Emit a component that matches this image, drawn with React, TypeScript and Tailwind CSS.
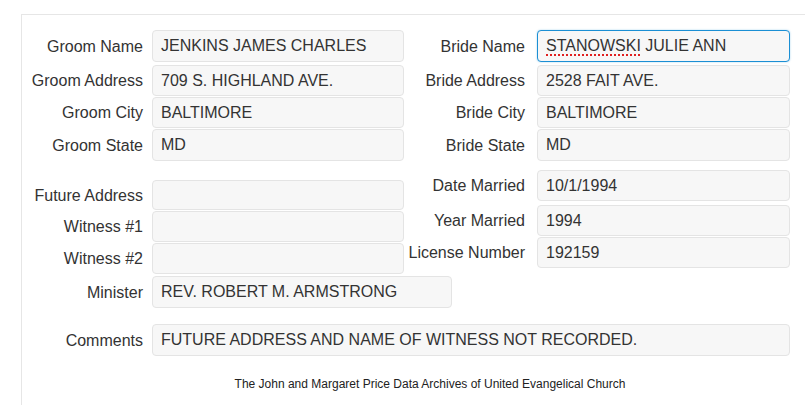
const font = { fontFamily: '"Liberation Sans", Arial, sans-serif' }

interface FieldProps {
  label: string
  value?: React.ReactNode
  rowClass?: string
  inputWidth?: string
}

// left-hand label + box, Bootstrap-ish horizontal form row
function Field({ label, value, rowClass = 'h-[32px]', inputWidth = 'w-[252px]' }: FieldProps) {
  return (
    <div className={['flex items-stretch', rowClass].join(' ')}>
      <div className="w-[121px] shrink-0 flex items-center justify-end text-[16px] text-[#333] whitespace-nowrap pt-[1px]">
        {label}
      </div>
      <div
        className={[
          'ml-[9px] flex items-center px-[8px] rounded-[4px] border border-[#e4e4e4] text-[16px] text-[#333] bg-[#f7f7f7] whitespace-nowrap',
          inputWidth,
        ].join(' ')}
      >
        {value}
      </div>
    </div>
  )
}

function RightField({ label, value, rowClass = 'h-[31px]' }: { label: string; value: React.ReactNode; rowClass?: string }) {
  return (
    <div className={['flex items-stretch', rowClass].join(' ')}>
      <div className="w-[121px] shrink-0 flex items-center justify-end text-[16px] text-[#333] whitespace-nowrap pt-[1px]">
        {label}
      </div>
      <div className="ml-[12px] w-[253px] flex items-center px-[8px] rounded-[4px] border border-[#e4e4e4] text-[16px] text-[#333] bg-[#f7f7f7] whitespace-nowrap">
        {value}
      </div>
    </div>
  )
}

export default function App() {
  return (
    <div className="w-[805px] h-[405px] bg-white overflow-hidden" style={font}>
      <div className="ml-[21px] mt-[14px] h-[391px] border-l border-t border-[#e6e6e6] pt-[15px]">
        {/* Groom / Bride */}
        <div className="flex">
          <div className="flex flex-col gap-[1px]">
            <Field label="Groom Name" value="JENKINS JAMES CHARLES" />
            <div className="mt-[2px] flex flex-col gap-[1px]">
              <Field label="Groom Address" value="709 S. HIGHLAND AVE." rowClass="h-[31px]" />
              <Field label="Groom City" value="BALTIMORE" rowClass="h-[31px]" />
              <Field label="Groom State" value="MD" rowClass="h-[32px]" />
            </div>
          </div>
          <div className="flex flex-col gap-[1px]">
            <div className="flex items-stretch h-[32px]">
              <div className="w-[121px] shrink-0 flex items-center justify-end text-[16px] text-[#333] pt-[1px]">
                Bride Name
              </div>
              <div className="ml-[12px] w-[253px] flex items-center px-[8px] rounded-[4px] border border-[#1b8fd4] shadow-[0_0_2px_rgba(27,143,212,0.4)] text-[16px] text-[#333] bg-[#f7f7f7] whitespace-nowrap">
                <span className="underline decoration-dotted decoration-[#e02020] decoration-2 underline-offset-[3px]">
                  STANOWSKI
                </span>
                &nbsp;JULIE ANN
              </div>
            </div>
            <div className="mt-[2px] flex flex-col gap-[1px]">
              <RightField label="Bride Address" value="2528 FAIT AVE." />
              <RightField label="Bride City" value="BALTIMORE" />
              <RightField label="Bride State" value="MD" rowClass="h-[32px]" />
            </div>
          </div>
        </div>

        {/* Other details */}
        <div className="flex">
          <div className="flex flex-col gap-[1px] mt-[19px]">
            <Field label="Future Address" rowClass="h-[30px]" />
            <Field label="Witness #1" rowClass="h-[31px]" />
            <Field label="Witness #2" rowClass="h-[31px]" />
            <div className="mt-[1px]">
              <Field label="Minister" value="REV. ROBERT M. ARMSTRONG" rowClass="h-[32px]" inputWidth="w-[300px]" />
            </div>
          </div>
          <div className="flex flex-col gap-[1px] mt-[9px] -ml-[48px]">
            <RightField label="Date Married" value="10/1/1994" />
            <div className="mt-[3px] flex flex-col gap-[1px]">
              <RightField label="Year Married" value="1994" />
              <RightField label="License Number" value="192159" />
            </div>
          </div>
        </div>

        {/* Comments */}
        <div className="mt-[16px]">
          <Field
            label="Comments"
            value="FUTURE ADDRESS AND NAME OF WITNESS NOT RECORDED."
            inputWidth="w-[638px]"
          />
        </div>

        <div className="mt-[19px] text-center text-[12px] text-[#222] pl-[33px]">
          The John and Margaret Price Data Archives of United Evangelical Church
        </div>
      </div>
    </div>
  )
}
